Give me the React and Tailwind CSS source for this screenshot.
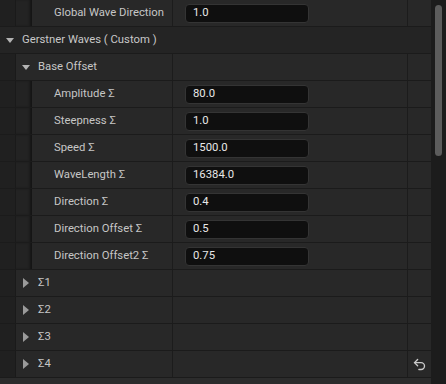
import React from "react";
import { Undo2 } from "lucide-react";

const font = { fontFamily: "Roboto, 'Noto Sans', sans-serif" };

const Stripe = ({ shade }) => (
  <div
    className={
      shade
        ? "w-4 shrink-0 bg-[#232323] shadow-[inset_-3px_0_3px_-1px_rgba(0,0,0,0.45)]"
        : "w-4 shrink-0 bg-[#202020] border-r border-[#1a1a1a]"
    }
  />
);

const Arrow = ({ open }) =>
  open ? (
    <span className="inline-block w-0 h-0 border-l-[4px] border-r-[4px] border-t-[5px] border-l-transparent border-r-transparent border-t-[#b4b4b4]" />
  ) : (
    <span className="inline-block w-0 h-0 border-t-[5px] border-b-[5px] border-l-[6px] border-t-transparent border-b-transparent border-l-[#9a9a9a]" />
  );

const PropRow = ({ label, value, reset }) => (
  <div className="flex h-[27px] border-b border-[#1b1b1b] bg-[#282828]">
    <Stripe />
    <Stripe shade />
    <div className="w-[141px] shrink-0 border-r border-[#1c1c1c] flex items-center pl-[22px] text-[11.3px] text-[#c6c6c6]">
      {label}
    </div>
    <div className="w-[235px] shrink-0 border-r border-[#1c1c1c] flex items-center pl-3">
      <div className="w-[124px] h-[19px] rounded-[4px] bg-[#0f0f0f] border border-[#343434] flex items-center pl-[7px] text-[11.3px] text-[#e8e8e8]">
        {value}
      </div>
    </div>
    <div className="flex-1 flex items-center justify-center">
      {reset && <Undo2 size={15} strokeWidth={2.2} className="text-[#cacaca]" />}
    </div>
  </div>
);

const GroupRow = ({ label, open, reset }) => (
  <div className="flex h-[27px] border-b border-[#1b1b1b] bg-[#282828]">
    <Stripe />
    <div
      className={
        open
          ? "w-[157px] shrink-0 border-r border-[#1c1c1c] flex items-center pl-[6px] gap-[8px] text-[11.3px] text-[#c6c6c6]"
          : "w-[157px] shrink-0 border-r border-[#1c1c1c] flex items-center pl-[7px] gap-[9px] text-[11.3px] text-[#c6c6c6]"
      }
    >
      <Arrow open={open} />
      <span>{label}</span>
    </div>
    <div className="w-[235px] shrink-0 border-r border-[#1c1c1c]" />
    <div className="flex-1 flex items-center justify-center">
      {reset && <Undo2 size={15} strokeWidth={2.2} className="text-[#cacaca]" />}
    </div>
  </div>
);

const props = [
  ["Amplitude Σ", "80.0"],
  ["Steepness Σ", "1.0"],
  ["Speed Σ", "1500.0"],
  ["WaveLength Σ", "16384.0"],
  ["Direction Σ", "0.4"],
  ["Direction Offset Σ", "0.5"],
  ["Direction Offset2 Σ", "0.75"],
];

export default function App() {
  return (
    <div className="w-[446px] h-[384px] flex bg-[#1c1c1c] overflow-hidden" style={font}>
      <div className="w-[431px] shrink-0 flex flex-col bg-[#2c2c2c]">
        <PropRow label="Global Wave Direction" value="1.0" />
        <div className="flex h-[27px] border-b border-[#1b1b1b] bg-[#242424] items-center pl-[6px] gap-[8px] text-[11.3px] text-[#c8c8c8]">
          <Arrow open />
          <span>Gerstner Waves ( Custom )</span>
        </div>
        <GroupRow label="Base Offset" open />
        {props.map(([l, v]) => (
          <PropRow key={l} label={l} value={v} />
        ))}
        <GroupRow label="Σ1" />
        <GroupRow label="Σ2" />
        <GroupRow label="Σ3" />
        <GroupRow label="Σ4" reset />
      </div>
      <div className="flex-1 pt-[5px] pl-[4px]">
        <div className="w-[7px] h-[151px] rounded-full bg-[#5c5c5c]" />
      </div>
    </div>
  );
}
